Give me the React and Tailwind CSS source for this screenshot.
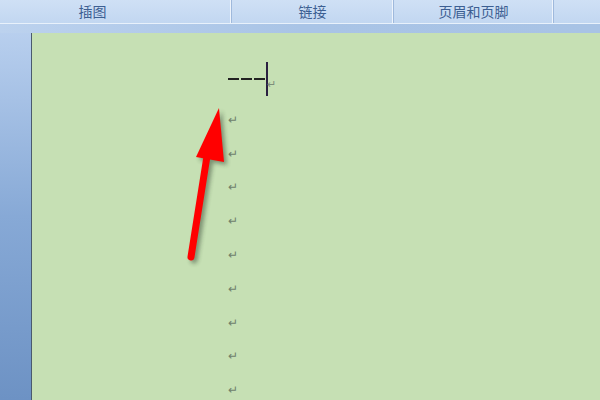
import React from "react";

const font = { fontFamily: '"Noto Sans CJK SC", "Liberation Sans", sans-serif' };

function Group({ width, label, className = "" }) {
  return (
    <div
      className={`flex h-full shrink-0 items-center justify-center border-r border-[#9fb9dc] shadow-[inset_-1px_0_0_#eef4fc] ${className}`}
      style={{ width }}
    >
      <span className="text-[14px] text-[#3d5f92]">{label}</span>
    </div>
  );
}

function Arrow() {
  return (
    <svg className="pointer-events-none absolute left-0 top-0" width="600" height="400" viewBox="0 0 600 400">
      <defs>
        <filter id="sh" x="-50%" y="-50%" width="200%" height="200%">
          <feGaussianBlur stdDeviation="2" />
        </filter>
      </defs>
      <g transform="translate(3,3)" opacity="0.45" filter="url(#sh)">
        <line x1="191" y1="257" x2="208" y2="150" stroke="#203020" strokeWidth="7" strokeLinecap="round" />
        <polygon points="219,108 196,157 224,162" fill="#203020" />
      </g>
      <line x1="191" y1="257" x2="208" y2="150" stroke="#ff0000" strokeWidth="7" strokeLinecap="round" />
      <polygon points="219,108 196,157 224,162" fill="#ff0000" />
    </svg>
  );
}

export default function App() {
  const marks = Array.from({ length: 9 });
  return (
    <div className="relative h-[400px] w-[600px] overflow-hidden bg-[#a9c3e5]" style={font}>
      {/* ribbon group labels */}
      <div className="flex h-[24px] bg-gradient-to-b from-[#cfe0f5] to-[#c2d7f1] border-b border-[#e8f1fb]">
        <Group width={232} label="插图" className="pr-[46px]" />
        <Group width={162} label="链接" />
        <Group width={160} label="页眉和页脚" />
        <div className="h-full flex-1" />
      </div>
      <div className="h-[9px] bg-gradient-to-r from-[#bcd2ee] via-[#a9c4e6] to-[#a8c3e5]" />
      <div className="flex h-[367px]">
        {/* left margin area */}
        <div className="w-[31px] bg-gradient-to-b from-[#b8cfee] via-[#87a9d6] to-[#6d92c4]" />
        <div className="w-px bg-[#4a5a6e]" />
        {/* page */}
        <div className="flex-1 bg-[#c6e0b4] pl-[196px] pt-[29px]">
          <div className="relative flex h-[34px] items-center">
            <div className="flex gap-[2px] pt-[-2px]">
              <span className="h-[1.5px] w-[11px] bg-[#222]" />
              <span className="h-[1.5px] w-[11px] bg-[#222]" />
              <span className="h-[1.5px] w-[11px] bg-[#222]" />
            </div>
            <span className="ml-px h-[34px] w-[2px] bg-[#2a2040]" />
            <span className="-ml-px mt-[8px] text-[11px] leading-none text-[#7d8e7a]">↵</span>
          </div>
          {marks.map((_, i) => (
            <div key={i} className="flex h-[33.8px] items-end pb-[5px] text-[12px] leading-none text-[#6f806c]">
              ↵
            </div>
          ))}
        </div>
      </div>
      <Arrow />
    </div>
  );
}
